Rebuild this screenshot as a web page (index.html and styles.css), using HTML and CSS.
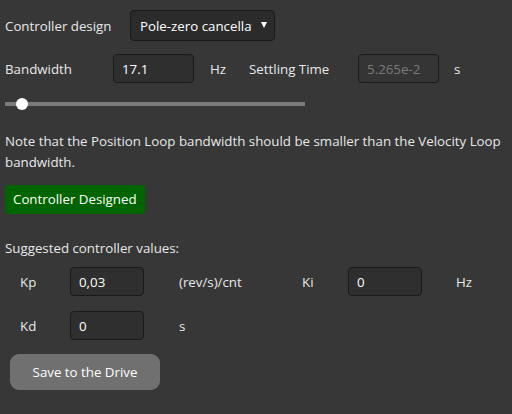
FILE: index.html
```html
<!DOCTYPE html>
<html lang="en">
<head>
<meta charset="UTF-8">
<title>Position Loop</title>
<link rel="stylesheet" href="styles.css">
</head>
<body>
<div class="panel">
    <div class="row designRow">
        <span class="designLabel">Controller design</span>
        <div class="selectBox">
            <span class="selectText">Pole-zero cancellation</span>
            <span class="selectArrow"></span>
        </div>
    </div>

    <div class="row bandRow">
        <span class="bandLabel">Bandwidth</span>
        <input class="field bandField" type="text" value="17.1">
        <span class="hzUnit">Hz</span>
        <span class="settleLabel">Settling Time</span>
        <input class="field settleField" type="text" value="5.265e-2" disabled>
        <span class="secUnit">s</span>
    </div>

    <div class="slider">
        <div class="sliderTrack"></div>
        <div class="sliderThumb"></div>
    </div>

    <p class="note">Note that the Position Loop bandwidth should be smaller than the Velocity Loop bandwidth.</p>

    <div class="status">Controller Designed</div>

    <p class="suggest">Suggested controller values:</p>

    <div class="row gainRow">
        <span class="gainLabel">Kp</span>
        <input class="field gainField" type="text" value="0,03">
        <span class="gainUnit">(rev/s)/cnt</span>
        <span class="gainLabel kiLabel">Ki</span>
        <input class="field gainField" type="text" value="0">
        <span class="hzGain">Hz</span>
    </div>

    <div class="row gainRow">
        <span class="gainLabel">Kd</span>
        <input class="field gainField" type="text" value="0">
        <span class="gainUnit">s</span>
    </div>

    <button class="saveButton">Save to the Drive</button>
</div>
</body>
</html>
```

FILE: styles.css
```css
html, body
{
    margin: 0;
    background-color: #373737;
    color: #e8e8e8;
    font-family: "Open Sans", "Noto Sans", sans-serif;
    font-size: 13.3px;
}

.panel
{
    padding: 10px 0 0 5px;
}

.row
{
    display: flex;
    align-items: center;
}

.designLabel
{
    width: 125px;
}

.selectBox
{
    box-sizing: border-box;
    display: flex;
    align-items: center;
    width: 145px;
    height: 31px;
    padding: 0 7px 0 9px;
    background-color: #2b2b2b;
    border: 1px solid #1a1a1a;
    border-radius: 4px;
    color: #ffffff;
}

.selectText
{
    width: 113px;
    overflow: hidden;
    white-space: nowrap;
}

/*small white triangle of the drop down*/
.selectArrow
{
    width: 0;
    height: 0;
    margin: 0 0 2px 9px;
    border-left: 3px solid transparent;
    border-right: 3px solid transparent;
    border-top: 6px solid #ffffff;
}

.bandRow
{
    margin-top: 13px;
}

.bandLabel
{
    width: 108px;
}

.field
{
    box-sizing: border-box;
    height: 29px;
    padding: 0 8px;
    background-color: #2f2f2f;
    border: 1px solid #1a1a1a;
    border-radius: 4px;
    color: #ffffff;
    font-family: inherit;
    font-size: 13.3px;
}

.bandField, .settleField
{
    width: 81px;
}

.settleField
{
    color: #7a7a7a;
    background-color: #353535;
}

.hzUnit
{
    margin-left: 16px;
}

.settleLabel
{
    margin-left: 23px;
    width: 109px;
}

.secUnit
{
    margin-left: 15px;
}

.slider
{
    position: relative;
    width: 300px;
    height: 14px;
    margin-top: 14px;
}

.sliderTrack
{
    position: absolute;
    top: 5px;
    left: 0;
    right: 0;
    height: 4px;
    background-color: #7a7a7a;
}

.sliderThumb
{
    position: absolute;
    top: 1px;
    left: 11px;
    width: 12px;
    height: 12px;
    border-radius: 50%;
    background-color: #ffffff;
}

.note
{
    margin: 20px 0 0 0;
    line-height: 21px;
}

.status
{
    display: inline-block;
    margin-top: 12px;
    padding: 5px 8px 6px 8px;
    background-color: #006400;
    border-radius: 3px;
    color: #ffffff;
}

.suggest
{
    margin: 25px 0 0 0;
}

.gainRow
{
    margin: 10px 0 0 15px;
}

.gainRow + .gainRow
{
    margin-top: 15px;
}

.gainLabel
{
    width: 50px;
}

.kiLabel
{
    width: 46px;
}

.gainField
{
    width: 74px;
}

.gainUnit
{
    width: 123px;
    margin-left: 35px;
}

.hzGain
{
    margin-left: 34px;
}

.saveButton
{
    width: 150px;
    height: 36px;
    margin: 14px 0 0 5px;
    background-color: #707070;
    border: none;
    border-radius: 9px;
    color: #ffffff;
    font-family: inherit;
    font-size: 13.3px;
}
```
